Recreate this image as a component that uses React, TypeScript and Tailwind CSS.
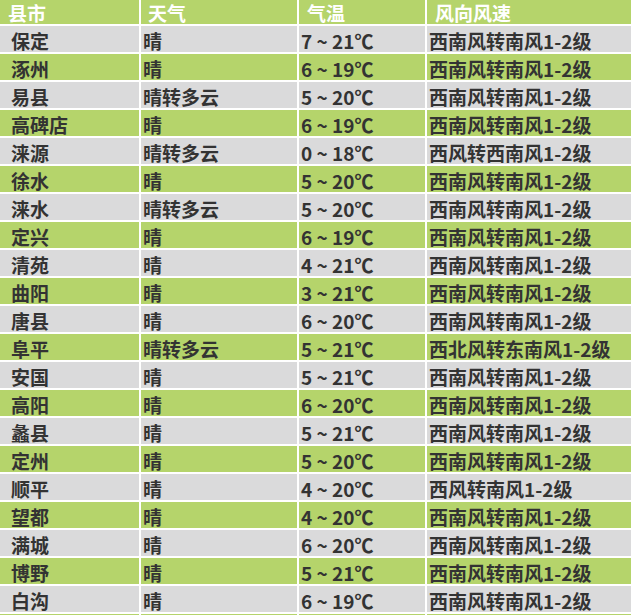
const rows: [string, string, string, string][] = [
  ["保定", "晴", "7 ~ 21℃", "西南风转南风1-2级"],
  ["涿州", "晴", "6 ~ 19℃", "西南风转南风1-2级"],
  ["易县", "晴转多云", "5 ~ 20℃", "西南风转南风1-2级"],
  ["高碑店", "晴", "6 ~ 19℃", "西南风转南风1-2级"],
  ["涞源", "晴转多云", "0 ~ 18℃", "西风转西南风1-2级"],
  ["徐水", "晴", "5 ~ 20℃", "西南风转南风1-2级"],
  ["涞水", "晴转多云", "5 ~ 20℃", "西南风转南风1-2级"],
  ["定兴", "晴", "6 ~ 19℃", "西南风转南风1-2级"],
  ["清苑", "晴", "4 ~ 21℃", "西南风转南风1-2级"],
  ["曲阳", "晴", "3 ~ 21℃", "西南风转南风1-2级"],
  ["唐县", "晴", "6 ~ 20℃", "西南风转南风1-2级"],
  ["阜平", "晴转多云", "5 ~ 21℃", "西北风转东南风1-2级"],
  ["安国", "晴", "5 ~ 21℃", "西南风转南风1-2级"],
  ["高阳", "晴", "6 ~ 20℃", "西南风转南风1-2级"],
  ["蠡县", "晴", "5 ~ 21℃", "西南风转南风1-2级"],
  ["定州", "晴", "5 ~ 20℃", "西南风转南风1-2级"],
  ["顺平", "晴", "4 ~ 20℃", "西风转南风1-2级"],
  ["望都", "晴", "4 ~ 20℃", "西南风转南风1-2级"],
  ["满城", "晴", "6 ~ 20℃", "西南风转南风1-2级"],
  ["博野", "晴", "5 ~ 21℃", "西南风转南风1-2级"],
  ["白沟", "晴", "6 ~ 19℃", "西南风转南风1-2级"],
];

const font = "font-['Noto_Sans_CJK_SC','Noto_Sans',sans-serif]";

export default function App() {
  return (
    <div className={`w-[631px] h-[615px] overflow-hidden bg-white ${font}`}>
      <div className="grid grid-cols-[139px_156px_126px_1fr] gap-[2px]">
        {/* header */}
        {["县市", "天气", "气温", "风向风速"].map((h, i) => (
          <div
            key={h}
            className={`h-[24px] bg-[#b5d46b] text-white font-bold text-[19px] leading-[20px] pt-[3px] whitespace-nowrap ${
              i === 1 ? "pl-[7px]" : "pl-[8px]"
            }`}
          >
            {h}
          </div>
        ))}
        {rows.map((r, ri) =>
          r.map((c, ci) => (
            <div
              key={`${ri}-${ci}`}
              className={`h-[26px] text-[#333333] font-bold text-[19px] leading-[22px] pt-[4px] whitespace-nowrap ${
                ri % 2 === 0 ? "bg-[#dadadb]" : "bg-[#b5d46b]"
              } ${ci === 0 ? "pl-[11px]" : "pl-[2px]"}`}
            >
              {c}
            </div>
          ))
        )}
        {/* next row, only a sliver shows */}
        <div className="h-[4px] bg-[#b5d46b]" />
        <div className="h-[4px] bg-[#b5d46b]" />
        <div className="h-[4px] bg-[#b5d46b]" />
        <div className="h-[4px] bg-[#b5d46b]" />
      </div>
    </div>
  );
}
